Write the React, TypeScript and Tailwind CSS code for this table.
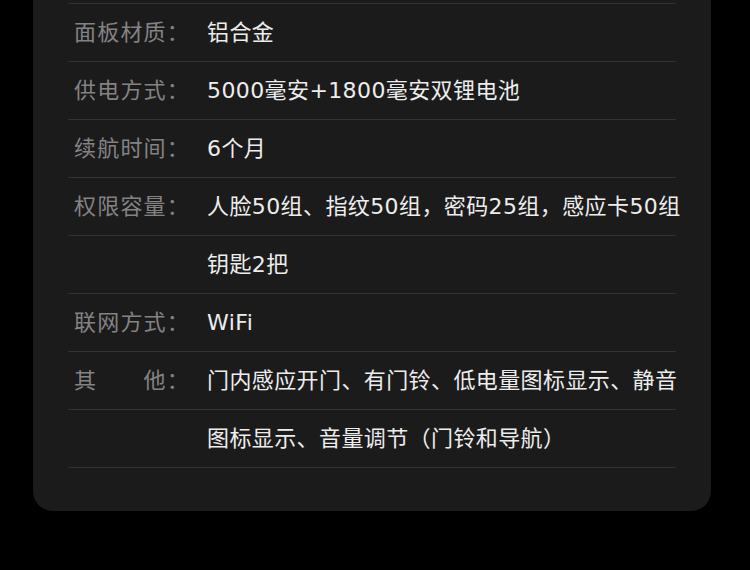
const rows: { label: string; value: string }[] = [
  { label: '面板材质：', value: '铝合金' },
  { label: '供电方式：', value: '5000毫安+1800毫安双锂电池' },
  { label: '续航时间：', value: '6个月' },
  { label: '权限容量：', value: '人脸50组、指纹50组，密码25组，感应卡50组' },
  { label: '', value: '钥匙2把' },
  { label: '联网方式：', value: 'WiFi' },
  { label: '其\u3000\u3000他：', value: '门内感应开门、有门铃、低电量图标显示、静音' },
  { label: '', value: '图标显示、音量调节（门铃和导航）' },
];

export default function App() {
  return (
    <div
      className="w-[750px] h-[570px] overflow-hidden bg-black"
      style={{ fontFamily: '"DejaVu Sans", "Noto Sans CJK SC", sans-serif' }}
    >
      <div className="ml-[33px] w-[678px] -mt-[20px] rounded-[20px] bg-[#1c1b1c] px-[35px] pt-[23px] pb-[43px]">
        <div className="border-b border-[#343334]">
          {rows.map((row, i) => (
            <div
              key={i}
              className="flex h-[58px] items-center border-t border-[#343334] pl-[6px] pb-[1px] text-[22px]"
            >
              <div className="w-[133px] shrink-0 text-[#848384] tracking-[1.2px] whitespace-pre">{row.label}</div>
              <div className="text-[#ededed] tracking-[0.4px] whitespace-nowrap">{row.value}</div>
            </div>
          ))}
        </div>
      </div>
    </div>
  );
}
